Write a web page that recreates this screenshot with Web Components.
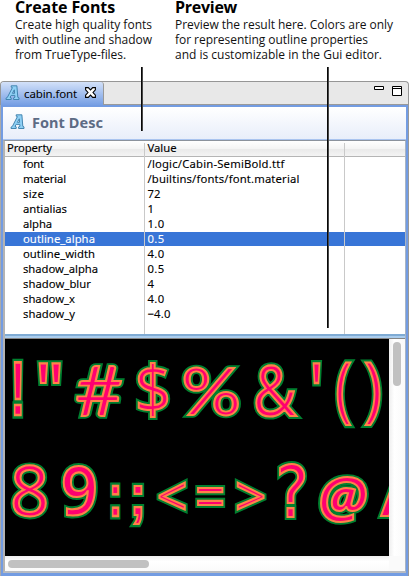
<!DOCTYPE html>
<html lang="en">
<head>
<meta charset="utf-8">
<title>cabin.font</title>
<style>
html,body{margin:0;width:409px;height:576px;overflow:hidden;background:#fff}
</style>
</head>
<body>
<font-editor-page></font-editor-page>
<script>
const make = (name, html, ready) => customElements.define(name, class extends HTMLElement {
  connectedCallback() {
    if (this.shadowRoot) return;
    const root = this.attachShadow({mode: 'open'});
    const t = document.createElement('template');
    t.innerHTML = html;
    root.append(t.content.cloneNode(true));
    if (ready) ready(this, root);
  }
});

// A single line of text, tracked so that it fills its "w" width.
make('fit-text', `<style>:host{display:inline-block;white-space:pre}</style><span></span>`, (el, root) => {
  const s = root.querySelector('span'), text = el.getAttribute('text');
  s.textContent = text;
  const cs = getComputedStyle(el), c = document.createElement('canvas').getContext('2d');
  c.font = `${cs.fontWeight} ${cs.fontSize} ${cs.fontFamily}`;
  s.style.letterSpacing = ((+el.getAttribute('w') - c.measureText(text).width) / text.length).toFixed(3) + 'px';
});

make('call-out', `<style>
:host{display:block;font:12px/15px "Open Sans","Noto Sans",sans-serif;color:#111}
h2{margin:0 0 3px;font-size:16px;line-height:14px;font-weight:700;color:#000}
p{margin:0}p fit-text{display:block}
</style><h2></h2><p></p>`, (el, root) => {
  const line = v => { const [w, t] = v.split('|'); const f = document.createElement('fit-text'); f.setAttribute('w', w); f.setAttribute('text', t); return f; };
  root.querySelector('h2').append(line(el.getAttribute('heading')));
  el.getAttribute('lines').split('/').forEach(v => root.querySelector('p').append(line(v)));
});

make('font-icon', `<style>:host{display:block;width:15px;height:16px}svg{display:block}</style>
<svg width="15" height="16" viewBox="0 0 15 16"><path d="M1 13.2 2.4 12.4 7.4 2.6 6.2 2.2V.8H11.9L12.8 12.3 14 12.9V14.5H8.6V12.9L9.9 12.3 9.8 10.4H6.2L5 12.3 6.2 12.9V14.5H1ZM7.4 8.3H9.6L9.3 4.8Z" fill="#8fd0f5" stroke="#397da9" stroke-width=".9" fill-rule="evenodd"/></svg>`);

make('tab-bar', `<style>
:host{display:flex;height:24px;box-sizing:border-box;border:1px solid #969696;border-bottom:0;border-radius:4px 4px 0 0;background:#e8e8e8;justify-content:space-between}
.tab{display:flex;align-items:center;box-sizing:border-box;width:103px;padding:0 0 2px 4px;border-right:1px solid #999;border-radius:3px 3px 0 0;background:linear-gradient(#d3e1f9,#769fe4);font:11.5px/20px "Noto Sans",sans-serif;color:#000}
.tab fit-text{margin-left:4px;width:54px;padding-top:2px}
.x{margin-left:7px;display:block}
.tools{display:flex;gap:8px;padding:4px 6px 0 0}
.rest{flex:1;border-bottom:1px solid #999;display:flex;justify-content:flex-end}
</style>
<div class="tab"><font-icon></font-icon><fit-text w="53" text="cabin.font"></fit-text>
<svg class="x" width="11" height="11" viewBox="0 0 11 11"><path d="M.6.6H3.3L5.5 2.9 7.7.6H10.4V2.8L8 5.5 10.4 8.2V10.4H7.7L5.5 8.1 3.3 10.4H.6V8.2L3 5.5.6 2.8Z" fill="#fff" stroke="#000" stroke-width="1.1"/></svg></div>
<div class="rest"><div class="tools">
<svg width="10" height="10" viewBox="0 0 10 10"><path d="M.5.5H9.5V3.5H.5Z" fill="#fff" stroke="#000"/></svg>
<svg width="10" height="10" viewBox="0 0 10 10"><path d="M.5.5H9.5V9.5H.5ZM0 2.5H10" fill="#fff" stroke="#000"/></svg>
</div></div>`);

make('form-title', `<style>
:host{display:flex;align-items:center;box-sizing:border-box;height:33px;padding:0 0 3px 7px;gap:7px;background:linear-gradient(#fff,#e8eefa);border-bottom:1px solid #a9c4ef;font:700 14.5px/20px "Noto Sans",sans-serif;color:#5d6b84}
</style><font-icon></font-icon><fit-text w="71" text="Font Desc"></fit-text>`);

make('property-row', `<style>
:host{display:grid;grid-template-columns:139px 1fr;height:15px;font:11.3px/15px "Noto Sans",sans-serif;color:#000}
:host([selected]){background:linear-gradient(#3875d7,#3875d7) 0 0/100% 14px no-repeat;color:#fff}
.k{padding-left:18px}.v{padding-left:3.5px}
:host([head]){color:#000;background:linear-gradient(#fff 0,#f4f4f4 50%,#e9e9e9 51%,#f4f4f4);border-bottom:1px solid #b5b5b5}
:host([head]) .k{padding-left:2px}
fit-text{line-height:15px;display:block;margin-top:-1px;-webkit-text-stroke:.1px}
</style><div class="k"></div><div class="v"></div>`, (el, root) => {
  for (const c of ['k', 'v']) {
    const [w, t] = el.getAttribute(c).split('|'), f = document.createElement('fit-text');
    f.setAttribute('w', w); f.setAttribute('text', t);
    root.querySelector('.' + c).append(f);
  }
});

make('property-table', `<style>
:host{display:block;height:193px;position:relative;background:#fff}
i{position:absolute;top:2px;bottom:0;width:1px;background:#c9c9c9}
</style>
<property-row head k="45|Property" v="29|Value"></property-row><slot></slot><i style="left:139px"></i><i style="left:339px"></i>`);

// Glyph sheet: every glyph is scaled to its cell on the texture; box values include the outline.
make('glyph-preview', `<style>:host{display:block;width:384px;height:217px;background:#000;overflow:hidden}svg{display:block}
text,use{stroke-linejoin:miter;stroke-miterlimit:3}
.o{fill:#00802f;stroke:#00802f}
.f{fill:#ff0070;stroke:#ff8248}
</style><svg width="384" height="217" viewBox="5 339 384 217"></svg>`, (el, root) => {
  const NS = 'http://www.w3.org/2000/svg', svg = root.querySelector('svg'), c = document.createElement('canvas').getContext('2d');
  const N = '600 72px "Open Sans"', R = '400 72px "Open Sans"', S = '700 72px "Liberation Sans"', I = 'italic 700 72px "Open Sans"';
  const glyphs = [
    ['!',11.4,24.6,360,418,S],['"',36,63,360,386,N],['#',73,124,363.5,419,'400 72px Lato'],['$',135.5,170.5,360,420,R],
    ['%',181.5,241.3,363.5,419.3,'400 72px Lato'],['&',252.5,300,363,419.5,R],["'",310,322.5,360,386,N],
    ['(',334,354,360,428,R],[')',362.5,383,360,428,R],
    ['8',10,49.3,463,520,R],['9',60,98,463,519.3,N],[':',109,121.3,483,519,S],[';',131,145,483,527,S],
    ['<',156,188,480,513,R],['=',195,226,486,508,R],['>',234.5,267,480,513,R],['?',277,308,461,519.5,'400 72px "DejaVu Sans"'],
    ['@',318,369,475,525,I],['A',378,427,466,519,N]];
  glyphs.forEach(([ch, l, r, t, b, font], i) => {
    c.font = font;
    const m = c.measureText(ch), p = 2.9;
    const sx = (r - l - 2 * p) / (m.actualBoundingBoxLeft + m.actualBoundingBoxRight);
    const sy = (b - t - 2 * p) / (m.actualBoundingBoxAscent + m.actualBoundingBoxDescent);
    const x = l + p + m.actualBoundingBoxLeft * sx, y = t + p + m.actualBoundingBoxAscent * sy;
    const add = (parent, tag, attrs) => {
      const e = document.createElementNS(NS, tag);
      for (const k in attrs) e.setAttribute(k, attrs[k]);
      parent.append(e);
      return e;
    };
    const place = `translate(${x} ${y}) scale(${sx} ${sy})`;
    const k = Math.sqrt(sx * sy);
    add(svg, 'use', {href: '#g' + i, class: 'o', transform: place, 'stroke-width': 5.8 / k});
    const g = add(svg, 'g', {class: 'f', transform: place, 'stroke-width': 2 / k});
    const e = add(g, 'text', {id: 'g' + i});
    e.textContent = ch; e.style.font = font;
  });
});

make('scroll-bar', `<style>
:host{display:block;box-sizing:border-box;background:linear-gradient(90deg,#eee,#fff 35%,#fafafa);padding:3px 3px 3px 4px}
:host([flat]){background:linear-gradient(#eee,#fff 35%,#fafafa);padding:4px 3px}
b{display:block;border-radius:4px;background:#c1c1c1;width:8px;height:44px}
:host([flat]) b{width:141px;height:8px}
</style><b></b>`);

make('font-editor-page', `<style>
:host{display:block;position:relative;width:409px;height:576px;background:#fff}
header{display:grid;grid-template-columns:160px 1fr;padding-left:15px;height:81px;box-sizing:border-box}
.frame{display:flex;flex-direction:column;box-sizing:border-box;height:471px;border:solid #739ce2;border-width:2px 2px 3px 2px;margin:0 1px}
.wrap{background:linear-gradient(90deg,#aaa 1px,#aaa 408px,#999 408px)}
.inner{border:solid #a9b4c2;border-width:1px 1px 2px 2px;border-top-color:#8b929c;border-left-color:#b3b3b3;box-sizing:border-box;flex:1;display:flex;flex-direction:column;border-bottom-color:#b8bcc2}
.sash{height:5px;box-sizing:border-box;background:linear-gradient(#7fabd4 0 2px,#aacdee 2px 4px,#858585 4px)}
.view{display:grid;grid-template-columns:384px 15px;grid-template-rows:217px 15px;background:#fafafa}
.line{position:absolute;width:2px;background:linear-gradient(90deg,#080808 1px,#484848 1px)}
</style>
<header>
<call-out heading="100|Create Fonts" lines="137|Create high quality fonts/137|with outline and shadow/111|from TrueType-files."></call-out>
<call-out heading="62|Preview" lines="218|Preview the result here. Colors are only/193|for representing outline properties/207|and is customizable in the Gui editor."></call-out>
</header>
<tab-bar></tab-bar>
<div class="wrap"><div class="frame"><form-title></form-title><div class="inner">
<property-table>
<property-row k="21|font" v="137|/logic/Cabin-SemiBold.ttf"></property-row>
<property-row k="43|material" v="152|/builtins/fonts/font.material"></property-row>
<property-row k="21|size" v="13|72"></property-row>
<property-row k="44|antialias" v="6|1"></property-row>
<property-row k="29|alpha" v="17|1.0"></property-row>
<property-row selected k="72|outline_alpha" v="17|0.5"></property-row>
<property-row k="72|outline_width" v="17|4.0"></property-row>
<property-row k="75|shadow_alpha" v="17|0.5"></property-row>
<property-row k="68|shadow_blur" v="7|4"></property-row>
<property-row k="52|shadow_x" v="17|4.0"></property-row>
<property-row k="52|shadow_y" v="23|−4.0"></property-row>
</property-table>
<div class="sash"></div>
<div class="view"><glyph-preview></glyph-preview><scroll-bar></scroll-bar><scroll-bar flat></scroll-bar></div>
</div></div></div>
<div class="line" style="left:141px;top:67px;height:64px"></div>
<div class="line" style="left:327px;top:67px;height:261px"></div>`);
</script>
</body>
</html>
